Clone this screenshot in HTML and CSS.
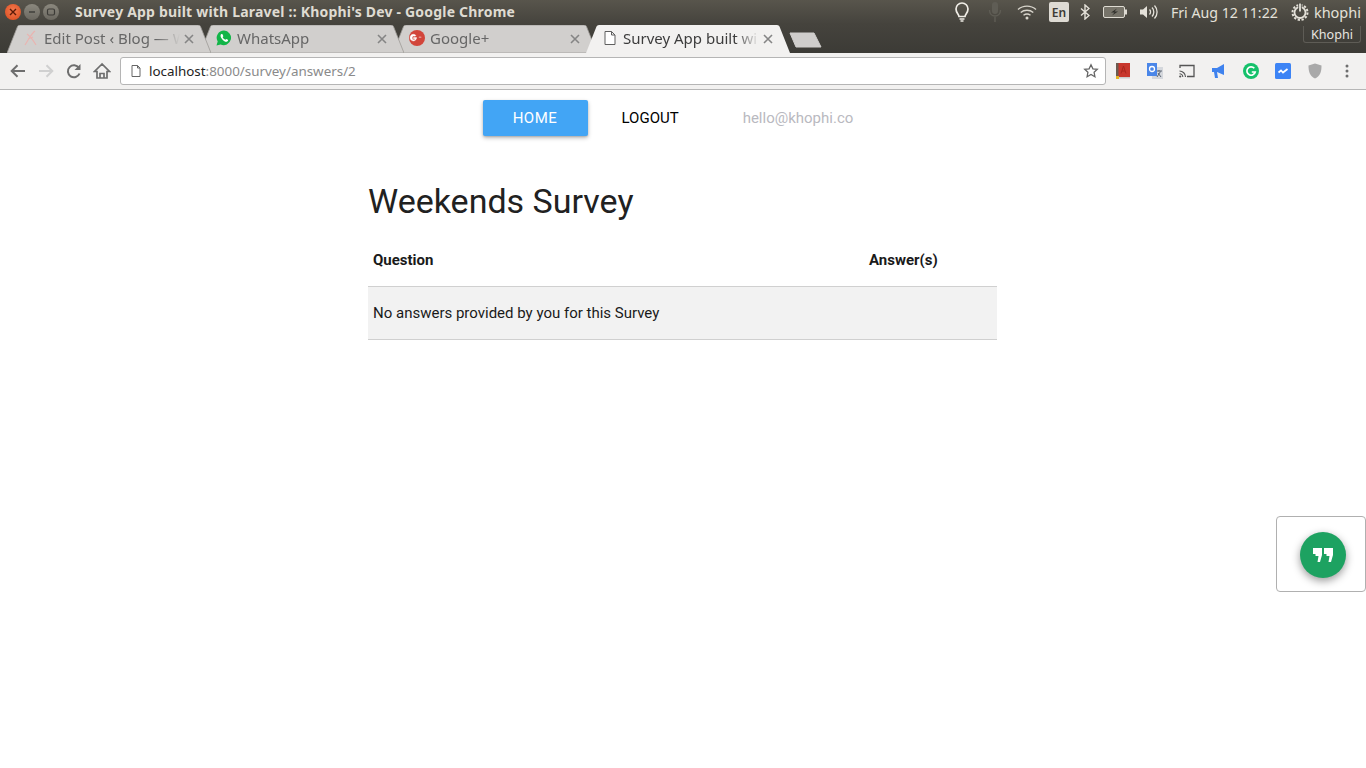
FILE: index.html
```html
<!DOCTYPE html>
<html lang="en">
<head>
<meta charset="utf-8">
<title>Survey App built with Laravel</title>
<link rel="stylesheet" href="styles.css">
</head>
<body>
<header class="titlebar">
  <div class="winbtns">
    <span class="winbtn close"><svg viewBox="0 0 8 8" width="8" height="8"><path d="M1 1l6 6M7 1L1 7" stroke="#5a1a08" stroke-width="1.4"/></svg></span>
    <span class="winbtn"><svg viewBox="0 0 8 8" width="8" height="8"><path d="M1 4h6" stroke="#3c3b37" stroke-width="1.4"/></svg></span>
    <span class="winbtn"><svg viewBox="0 0 10 8" width="10" height="8"><rect x="1.5" y="1" width="7" height="6" rx="1.5" fill="none" stroke="#3c3b37" stroke-width="1.2"/></svg></span>
  </div>
  <div class="wintitle">Survey App built with Laravel :: Khophi's Dev - Google Chrome</div>
  <div class="tray">
    <svg class="ti-bulb" width="18" height="20" viewBox="0 0 18 20"><path d="M6 14.500c0-2-3-3.500-3-7.500a6 6 0 0 1 12 0c0 4-3 5.500-3 7.500z" fill="none" stroke="#f0ede6" stroke-width="1.700"/><path d="M6.500 17h5M7.500 19h3" stroke="#f0ede6" stroke-width="1.500"/></svg>
    <svg class="ti-mic" width="14" height="22" viewBox="0 0 14 22"><rect x="4" y="1" width="6" height="12" rx="3" fill="#5f5d55"/><path d="M1.500 9c0 8 11 8 11 0M7 16v5" fill="none" stroke="#5f5d55" stroke-width="1.400"/></svg>
    <svg class="ti-wifi" width="20" height="16" viewBox="0 0 20 16"><path d="M1 5.500c5-4.500 13-4.500 18 0M3.700 8.500c3.500-3 9-3 12.600 0M6.500 11.300c2-1.500 5-1.500 7 0" fill="none" stroke="#d8d5cc" stroke-width="1.400"/><circle cx="10" cy="14" r="1.500" fill="#d8d5cc"/></svg>
    <span class="ti-en">En</span>
    <svg class="ti-bt" width="10" height="16" viewBox="0 0 10 16"><path d="M1 4.500l8 7-4 3.500V1l4 3.500-8 7" fill="none" stroke="#e4e1d9" stroke-width="1.400"/></svg>
    <svg class="ti-bat" width="24" height="12" viewBox="0 0 24 12"><rect x=".5" y=".5" width="21" height="11" rx="1.500" fill="#77746a" stroke="#dedbd2"/><rect x="22" y="3.500" width="2" height="5" fill="#dedbd2"/><path d="M14 2.500L8 6.500h3.500L9 9.500l6-4h-3.500z" fill="#2f2e2a"/></svg>
    <svg class="ti-vol" width="20" height="16" viewBox="0 0 20 16"><path d="M1 5.500h3L8 2v12L4 10.500H1z" fill="#e4e1d9"/><path d="M10.500 5.500a3.500 3.500 0 0 1 0 5M13 3.500a6.500 6.500 0 0 1 0 9M15.500 1.500a9.500 9.500 0 0 1 0 13" fill="none" stroke="#e4e1d9" stroke-width="1.300"/></svg>
    <span class="ti-clock">Fri Aug 12 11:22</span>
    <svg class="ti-power" width="18" height="18" viewBox="0 0 18 18"><circle cx="9" cy="9.500" r="7.500" fill="none" stroke="#e4e1d9" stroke-width="2" stroke-dasharray="2.300 1.630"/><circle cx="9" cy="9.500" r="5.500" fill="none" stroke="#e4e1d9" stroke-width="1.800"/><path d="M9 0v8.500" stroke="#47453f" stroke-width="3.400"/><path d="M9 .5v8" stroke="#e4e1d9" stroke-width="1.800"/></svg>
    <span class="ti-user">khophi</span>
  </div>
</header>

<div class="tabstrip">
  <div class="tab t1">
    <svg class="tabshape" viewBox="0 0 204 28" width="204" height="28"><path d="M0 28L10.500 1.500Q11 0 13 0H191Q193 0 193.500 1.500L204 28z" class="ts"/></svg>
    <svg class="fav" width="16" height="16" viewBox="0 0 16 16"><path d="M12 1C8 4 6 9 2 15M4 4c3 2 6 6 9 11M5 9l5-2" fill="none" stroke="#e9b4b0" stroke-width="1.200"/></svg>
    <span class="tabtitle">Edit Post ‹ Blog — W</span>
    <svg class="x" width="10" height="10" viewBox="0 0 10 10"><path d="M1 1l8 8M9 1l-8 8" stroke="#858585" stroke-width="1.600"/></svg>
  </div>
  <div class="tab t2">
    <svg class="tabshape" viewBox="0 0 204 28" width="204" height="28"><path d="M0 28L10.500 1.500Q11 0 13 0H191Q193 0 193.500 1.500L204 28z" class="ts"/></svg>
    <svg class="fav" width="16" height="16" viewBox="0 0 16 16"><path d="M8 .5a7.300 7.300 0 0 0-6.300 11L.5 15.500l4.100-1.100A7.300 7.300 0 1 0 8 .5z" fill="#12b548"/><path d="M5.500 3.800c-1.500 1.200-1.200 3 .5 5.200s4 3.500 5.200 2.500c1-.8 1-1.400.7-1.700l-1.600-.9-.9.900c-1.200-.4-2.300-1.500-2.800-2.800l.8-.8-.8-1.800c-.3-.4-.8-.4-1.100-.1z" fill="#fff"/></svg>
    <span class="tabtitle">WhatsApp</span>
    <svg class="x" width="10" height="10" viewBox="0 0 10 10"><path d="M1 1l8 8M9 1l-8 8" stroke="#858585" stroke-width="1.600"/></svg>
  </div>
  <div class="tab t3">
    <svg class="tabshape" viewBox="0 0 204 28" width="204" height="28"><path d="M0 28L10.500 1.500Q11 0 13 0H191Q193 0 193.500 1.500L204 28z" class="ts"/></svg>
    <svg class="fav" width="16" height="16" viewBox="0 0 16 16"><circle cx="8" cy="8" r="8" fill="#d2453a"/><path d="M7.500 7.500h-3v1.300h1.800c-.2.800-1 1.200-1.800 1a2 2 0 0 1 0-3.800c.6-.1 1.100 0 1.500.4l.9-.9A3.300 3.300 0 1 0 7.600 8.200zM11 6.500V8M9.700 7.200h2.800" fill="#fff" stroke="#fff" stroke-width=".4"/></svg>
    <span class="tabtitle">Google+</span>
    <svg class="x" width="10" height="10" viewBox="0 0 10 10"><path d="M1 1l8 8M9 1l-8 8" stroke="#858585" stroke-width="1.600"/></svg>
  </div>
  <div class="tab t4">
    <svg class="tabshape" viewBox="0 0 204 28" width="204" height="28"><path d="M0 28L10.500 1.500Q11 0 13 0H191Q193 0 193.500 1.500L204 28z" class="ts active"/></svg>
    <svg class="fav" width="16" height="16" viewBox="0 0 16 16"><path d="M3 1.500h6.500L13 5v9.500H3z M9.500 1.500V5H13" fill="#fff" stroke="#5f5f5f" stroke-width="1"/></svg>
    <span class="tabtitle">Survey App built wi</span>
    <svg class="x" width="10" height="10" viewBox="0 0 10 10"><path d="M1 1l8 8M9 1l-8 8" stroke="#858585" stroke-width="1.600"/></svg>
  </div>
  <svg class="newtab" width="34" height="16" viewBox="0 0 34 16"><path d="M1 1h24l7 14H7z" fill="#cfcdcb" stroke="#cfcdcb" stroke-linejoin="round"/></svg>
  <span class="profile">Khophi</span>
</div>

<div class="toolbar">
  <div class="navbtns">
    <svg width="18" height="18" viewBox="0 0 18 18"><path d="M16 9H3M8.500 3.200L2.700 9l5.800 5.800" fill="none" stroke="#6e6e6e" stroke-width="2"/></svg>
    <svg width="18" height="18" viewBox="0 0 18 18"><path d="M2 9h13M9.500 3.200L15.300 9l-5.800 5.800" fill="none" stroke="#d0d0d0" stroke-width="2"/></svg>
    <svg width="18" height="18" viewBox="0 0 18 18"><path d="M14.500 11.500a6 6 0 1 1-.6-5.500" fill="none" stroke="#6e6e6e" stroke-width="2"/><path d="M15.500 2v6h-6z" fill="#6e6e6e"/></svg>
    <svg width="18" height="18" viewBox="0 0 18 18"><path d="M9 2L1.500 9.500H4V16h10V9.500h2.500zM7 16v-4.500h4V16" fill="none" stroke="#6e6e6e" stroke-width="1.700"/></svg>
  </div>
  <div class="omnibox">
    <svg class="pageicon" width="12" height="14" viewBox="0 0 12 14"><path d="M2 1.500h5.500L10 4v8.500H2zM7.500 1.500V4H10" fill="#fff" stroke="#666" stroke-width="1"/></svg>
    <span class="url"><b>localhost</b>:8000/survey/answers/2</span>
    <svg class="star" width="16" height="16" viewBox="0 0 16 16"><path d="M8 1.800l1.900 4 4.400.5-3.200 3 .8 4.400L8 11.500l-3.900 2.200.8-4.400-3.200-3 4.400-.5z" fill="none" stroke="#666" stroke-width="1.300"/></svg>
  </div>
  <div class="exts">
    <svg width="16" height="16" viewBox="0 0 16 16"><rect x="1" y="0" width="14" height="14" fill="#c8372d"/><rect x="1" y="0" width="2.500" height="14" fill="#6b5b50"/><path d="M6 10.500L8.500 3 11 10.500M7 8h3" fill="none" stroke="#a8261d"/><rect x="1" y="14" width="14" height="1.500" fill="#ccc"/><rect x="1" y="13" width="3" height="3" fill="#e6b422"/></svg>
    <svg width="16" height="16" viewBox="0 0 16 16"><rect x="5" y="4" width="11" height="12" fill="#d4d7dc"/><path d="M9 8h6M12 7v1.500M10 14l3.500-5.500M11 10l3 4" stroke="#5a6472" fill="none"/><path d="M0 0h10v13H0z" fill="#4a86e8"/><circle cx="5" cy="6" r="2.500" fill="none" stroke="#fff" stroke-width="1.300"/></svg>
    <svg width="16" height="14" viewBox="0 0 16 14"><path d="M1 4V1.500h14v11H8" fill="none" stroke="#555" stroke-width="1.300"/><path d="M.5 7a6 6 0 0 1 6 6M.5 9.700a3.300 3.300 0 0 1 3.300 3.300" fill="none" stroke="#555" stroke-width="1.100"/><circle cx="1.200" cy="12.500" r="1.100" fill="#555"/></svg>
    <svg width="14" height="16" viewBox="0 0 14 16"><path d="M0 5h5L12 1v11L5 9l1 6H3L2 9H0z" fill="#3f82ee"/></svg>
    <svg width="16" height="16" viewBox="0 0 16 16"><circle cx="8" cy="8" r="8" fill="#15c16b"/><path d="M11.300 5.300A4.200 4.200 0 1 0 12.200 9H8.800" fill="none" stroke="#fff" stroke-width="1.700"/></svg>
    <svg width="16" height="16" viewBox="0 0 16 16"><rect width="16" height="16" rx="1.500" fill="#3d84f5"/><path d="M3.500 9.500L6 7.500 8 9.500 12.500 6" fill="none" stroke="#fff" stroke-width="1.700"/></svg>
    <svg width="14" height="16" viewBox="0 0 14 16"><path d="M7 .5l6.500 2c0 6-1 10.500-6.500 13C1.500 13 .5 8.500.5 2.500z" fill="#a9a9a9"/></svg>
    <svg width="4" height="14" viewBox="0 0 4 14"><circle cx="2" cy="2" r="1.500" fill="#6e6e6e"/><circle cx="2" cy="7" r="1.500" fill="#6e6e6e"/><circle cx="2" cy="12" r="1.500" fill="#6e6e6e"/></svg>
  </div>
</div>

<main class="page">
  <nav class="nav">
    <a class="nav-home">HOME</a>
    <a class="nav-logout">LOGOUT</a>
    <a class="nav-email">hello@khophi.co</a>
  </nav>
  <section class="content">
    <h1>Weekends Survey</h1>
    <table>
      <thead><tr><th class="c1">Question</th><th>Answer(s)</th></tr></thead>
      <tbody><tr><td colspan="2">No answers provided by you for this Survey</td></tr></tbody>
    </table>
  </section>
  <aside class="widget">
    <span class="fab"><svg width="20" height="14" viewBox="0 0 20 14"><path d="M0 0h9v7L7 14H4.500L5.500 8H2.500V6H0zM11 0h9v7L18 14H15.500L16.500 8H13.500V6H11z" fill="#fff"/></svg></span>
  </aside>
</main>
</body>
</html>
```
FILE: styles.css
```css
* { box-sizing: border-box; }
html, body { margin: 0; padding: 0; }
body { width: 1366px; height: 768px; overflow: hidden; background: #fff; display: flex; flex-direction: column; font-family: Roboto, sans-serif; }

.titlebar { height: 24px; flex: none; display: flex; align-items: center; background: linear-gradient(#58554c, #45433d); font-family: "Noto Sans", sans-serif; color: #e4e1d9; }
.winbtns { display: flex; gap: 3px; margin-left: 5px; width: 70px; }
.winbtn { width: 16px; height: 16px; border-radius: 50%; background: linear-gradient(#8b887e, #6b6860); display: flex; align-items: center; justify-content: center; }
.winbtn.close { background: radial-gradient(circle at 50% 40%, #f47a4e, #d9491c); }
.wintitle { font-weight: 700; font-size: 14px; color: #dfdbd2; white-space: nowrap; letter-spacing: .2px; padding-bottom: 1px; }
.tray { margin-left: auto; display: flex; align-items: center; margin-right: 5px; font-size: 14px; }
.ti-mic { margin-left: 17px; }
.ti-wifi { margin-left: 15px; }
.ti-en { margin-left: 12px; width: 20px; height: 20px; background: #dedbd4; color: #3c3b37; border-radius: 2px; font-size: 12px; font-weight: 600; display: flex; align-items: center; justify-content: center; }
.ti-bt { margin-left: 11px; }
.ti-bat { margin-left: 13px; }
.ti-vol { margin-left: 12px; }
.ti-clock { margin-left: 12px; font-size: 14.200px; }
.ti-power { margin-left: 13px; }
.ti-user { margin-left: 5px; font-size: 14.500px; }

.tabstrip { height: 29px; flex: none; position: relative; display: flex; align-items: flex-start; padding: 1px 0 0 7px; background: linear-gradient(#45433d, #3c3b36); font-family: "Noto Sans", sans-serif; }
.tab { position: relative; flex: none; width: 204px; height: 28px; margin-right: -11px; display: flex; align-items: center; padding: 0 17px 2px 16px; font-size: 15px; color: #666; }
.t1 { z-index: 3; } .t2 { z-index: 2; } .t3 { z-index: 1; } .t4 { z-index: 4; color: #3c3c3c; }
.tabshape { position: absolute; left: 0; top: 0; }
.ts { fill: #d1cfcd; stroke: #9d9b97; stroke-width: .8; }
.ts.active { fill: #f2f1f0; stroke: none; }
.fav { position: relative; flex: none; margin-right: 5px; }
.tabtitle { position: relative; flex: 1; min-width: 0; white-space: nowrap; -webkit-mask-image: linear-gradient(to left, transparent, #000 24px); mask-image: linear-gradient(to left, transparent, #000 24px); }
.x { position: relative; flex: none; margin-left: 4px; margin-top: 2px; }
.newtab { flex: none; margin: 7px 0 0 10px; }
.profile { position: absolute; right: 5px; top: 2px; width: 58px; height: 17px; border: 1px solid #5e5c56; border-top: none; border-radius: 0 0 3px 3px; color: #e8e6e0; font-size: 12.600px; line-height: 18px; text-align: center; }

.toolbar { height: 37px; flex: none; display: flex; align-items: center; background: #f2f1f0; border-bottom: 1px solid #b6b6b6; padding-bottom: 1px; }
.navbtns { display: flex; gap: 10px; width: 120px; padding-left: 9px; }
.omnibox { width: 986px; height: 28px; background: #fff; border: 1px solid #b5b5b5; border-radius: 3px; display: flex; align-items: center; padding: 0 6px 0 9px; font-family: "Noto Sans", sans-serif; font-size: 13.400px; color: #8a8a8a; }
.pageicon { flex: none; margin-right: 7px; }
.url { flex: 1; white-space: nowrap; }
.url b { font-weight: 400; color: #222; }
.star { flex: none; }
.exts { flex: 1; display: grid; grid-template-columns: repeat(8, 32px); align-items: center; justify-items: center; padding-left: 1px; }

.page { flex: 1; position: relative; }
.nav { display: flex; align-items: center; height: 36px; margin-top: 10px; padding-left: 483px; font-size: 15px; }
.nav-home { width: 105px; height: 36px; background: #42a5f5; color: #fff; border-radius: 2px; box-shadow: 0 2px 4px rgba(0,0,0,.25), 0 1px 2px rgba(0,0,0,.15); display: flex; align-items: center; justify-content: center; letter-spacing: .5px; padding-right: 1px; }
.nav-logout { margin-left: 33.500px; color: #000; }
.nav-email { margin-left: 64px; color: #b9b9c0; }
.content { width: 629px; margin-left: 368px; }
h1 { margin: 44px 0 0; font-size: 34px; font-weight: 400; line-height: 42px; color: #212121; }
table { width: 100%; margin-top: 11px; border-collapse: collapse; font-size: 15px; color: #1a1a1a; }
th { text-align: left; font-weight: 700; height: 53px; padding: 2px 5px 0; border-bottom: 1px solid #d0d0d0; }
th.c1 { width: 496px; }
td { height: 53px; padding: 0 5px; background: #f2f2f2; border-bottom: 1px solid #d0d0d0; }
.widget { position: absolute; left: 1276px; top: 426px; width: 90px; height: 76px; border: 1px solid #b0b0b0; border-radius: 4px; }
.fab { position: absolute; left: 23px; top: 15px; width: 46px; height: 46px; border-radius: 50%; background: #1da261; box-shadow: 0 3px 8px rgba(0,0,0,.4); display: flex; align-items: center; justify-content: center; }
```
